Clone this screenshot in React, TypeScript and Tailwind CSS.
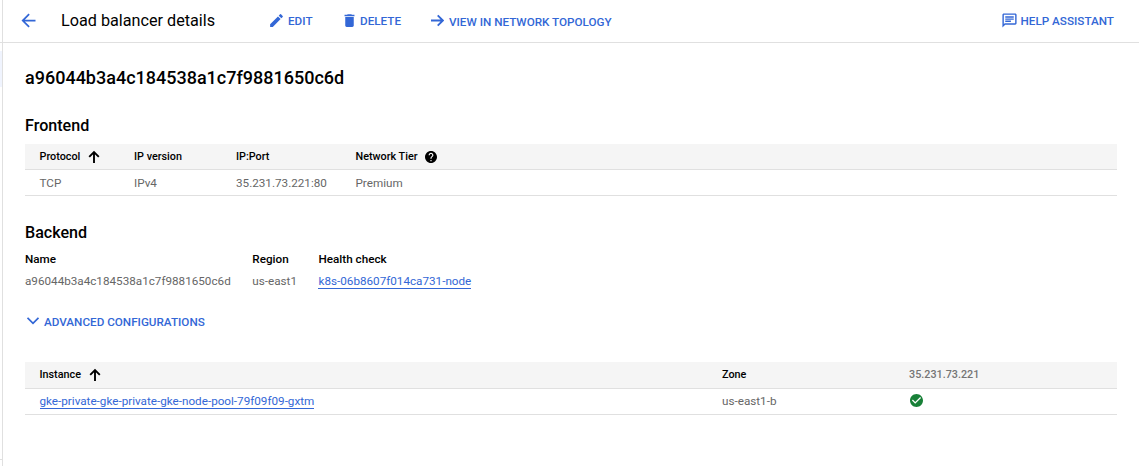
import type { ReactNode } from "react";

function Icon({ d, className, box = "0 0 24 24" }: { d: string; className: string; box?: string }) {
  return (
    <svg viewBox={box} className={`shrink-0 ${className}`} fill="currentColor" aria-hidden="true">
      <path d={d} />
    </svg>
  );
}

const BACK = "M20 11H7.83l5.59-5.59L12 4l-8 8 8 8 1.41-1.41L7.83 13H20v-2z";
const PENCIL =
  "M3 17.25V21h3.75L17.81 9.94l-3.75-3.75L3 17.25zM20.71 7.04a1 1 0 0 0 0-1.41l-2.34-2.34a1 1 0 0 0-1.41 0l-1.83 1.83 3.75 3.75 1.83-1.83z";
const TRASH = "M6 19c0 1.1.9 2 2 2h8c1.1 0 2-.9 2-2V7H6v12zM19 4h-3.5l-1-1h-5l-1 1H5v2h14V4z";
const CHAT =
  "M4 4h16v12H5.17L4 17.17V4m0-2c-1.1 0-1.99.9-1.99 2L2 22l4-4h14c1.1 0 2-.9 2-2V4c0-1.1-.9-2-2-2H4zm2 10h8v2H6v-2zm0-3h12v2H6V9zm0-3h12v2H6V6z";
const HELP =
  "M12 2C6.48 2 2 6.48 2 12s4.48 10 10 10 10-4.48 10-10S17.52 2 12 2zm1 17h-2v-2h2v2zm2.07-7.75l-.9.92C13.45 12.9 13 13.5 13 15h-2v-.5c0-1.1.45-2.1 1.17-2.83l1.24-1.26c.37-.36.59-.86.59-1.41 0-1.1-.9-2-2-2s-2 .9-2 2H8c0-2.21 1.79-4 4-4s4 1.79 4 4c0 .88-.36 1.68-.93 2.25z";
const CHECK =
  "M12 2C6.48 2 2 6.48 2 12s4.48 10 10 10 10-4.48 10-10S17.52 2 12 2zm-2 15l-5-5 1.41-1.41L10 14.17l7.59-7.59L19 8l-9 9z";

function SortArrow() {
  return (
    <svg viewBox="0 0 12 14" className="mt-px h-[14px] w-3 shrink-0" fill="none" stroke="black" strokeWidth="1.9" aria-hidden="true">
      <path d="M6 13V2M1.2 6.8 6 2l4.8 4.8" />
    </svg>
  );
}

function Action({ children, className }: { children: ReactNode; className: string }) {
  return (
    <button className={`flex items-center whitespace-nowrap text-[11.7px] font-medium text-[#3367d6] ${className}`}>
      {children}
    </button>
  );
}

export default function App() {
  return (
    <div className="flex h-[466px] w-full overflow-hidden bg-white font-['Roboto',sans-serif] text-[11.7px] leading-4 text-black">
      <aside className="flex w-[2px] shrink-0 flex-col">
        <div className="h-[43px] border-b border-[#e0e0e0]" />
        <div className="mt-2 h-9 bg-[#f0f4fe]" />
        <div className="mt-auto h-[7px] border-t border-[#e0e0e0]" />
      </aside>
      <main className="min-w-0 flex-1 border-l border-[#e0e0e0]">
        <header className="flex h-[43px] items-center border-b border-[#e0e0e0] pr-[25px] pb-[1px]">
          <Icon d={BACK} className="ml-[15px] h-[21px] w-[21px] text-[#3367d6]" />
          <h1 className="ml-[22px] w-[155px] text-[16.2px] leading-6 whitespace-nowrap">Load balancer details</h1>
          <Action className="ml-[52px] w-[72.5px]">
            <Icon d={PENCIL} className="mr-[3px] h-[17px] w-[17px]" />
            <span className="pt-px">EDIT</span>
          </Action>
          <Action className="w-[88.5px]">
            <Icon d={TRASH} className="mr-[2.5px] h-[17px] w-[17px]" />
            <span className="pt-px">DELETE</span>
          </Action>
          <Action className="">
            <svg viewBox="0 0 12 12" className="mr-[5px] ml-[2px] h-[13px] w-[13px]" fill="none" stroke="currentColor" strokeWidth="1.7" aria-hidden="true">
              <path d="M0 6h11M6.2 1.2 11 6l-4.8 4.8" />
            </svg>
            <span className="pt-[3px]">VIEW IN NETWORK TOPOLOGY</span>
          </Action>
          <Action className="ml-auto">
            <Icon d={CHAT} className="mr-[3px] h-[17px] w-[17px]" />
            <span className="pt-px">HELP ASSISTANT</span>
          </Action>
        </header>

        <div className="flex flex-col pr-[22px] pl-[22px]">
          <h2 className="mt-[23px] text-[18px] leading-6 font-medium">a96044b3a4c184538a1c7f9881650c6d</h2>
          <h3 className="mt-[26px] text-[16.1px] leading-5 font-medium">Frontend</h3>
          <div className="mt-[8px] grid h-[26px] grid-cols-[94.5px_102px_119.5px_1fr] items-center border-b border-[#e0e0e0] bg-[#f5f5f5] pl-[14.5px] text-[10.8px] font-medium">
            <div className="flex items-center">
              <span className="w-[48.5px]">Protocol</span>
              <SortArrow />
            </div>
            <span>IP version</span>
            <span>IP:Port</span>
            <div className="flex items-center">
              <span className="w-[69.5px]">Network Tier</span>
              <Icon d={HELP} box="2 2 20 20" className="h-3 w-3" />
            </div>
          </div>
          <div className="grid h-[26px] grid-cols-[94.5px_102px_119.5px_1fr] items-center border-b border-[#e0e0e0] pl-[14.5px] text-[#666666]">
            <span>TCP</span>
            <span>IPv4</span>
            <span>35.231.73.221:80</span>
            <span>Premium</span>
          </div>

          <h3 className="mt-[27px] text-[16.1px] leading-5 font-medium">Backend</h3>
          <div className="mt-[8px] grid grid-cols-[227.3px_66.2px_1fr] font-medium">
            <span>Name</span>
            <span>Region</span>
            <span>Health check</span>
          </div>
          <div className="mt-[6px] grid grid-cols-[227.3px_66.2px_1fr] text-[#666666]">
            <span>a96044b3a4c184538a1c7f9881650c6d</span>
            <span>us-east1</span>
            <a className="h-4 justify-self-start border-b border-[#3367d6] text-[#3367d6]">k8s-06b8607f014ca731-node</a>
          </div>
          <Action className="mt-[25px] pl-[2px]">
            <svg viewBox="0 0 12 8" className="mr-[5px] mb-[2px] h-2 w-3" fill="none" stroke="currentColor" strokeWidth="1.8" aria-hidden="true">
              <path d="M.5.8 6 6.3 11.5.8" />
            </svg>
            <span>ADVANCED CONFIGURATIONS</span>
          </Action>

          <div className="mt-[32px] grid h-[27px] grid-cols-[682.5px_187px_1fr] items-center border-b border-[#e0e0e0] bg-[#f5f5f5] pb-[1px] pl-[14.5px] text-[10.8px] font-medium">
            <div className="flex items-center">
              <span className="w-[49.5px]">Instance</span>
              <SortArrow />
            </div>
            <span>Zone</span>
            <span className="text-[#757575]">35.231.73.221</span>
          </div>
          <div className="grid h-[26px] grid-cols-[682.5px_187px_1fr] items-start border-b border-[#e0e0e0] pt-[4px] pl-[14.5px] text-[#666666]">
            <a className="h-4 justify-self-start border-b border-[#3367d6] text-[#3367d6]">
              gke-private-gke-private-gke-node-pool-79f09f09-gxtm
            </a>
            <span>us-east1-b</span>
            <Icon d={CHECK} box="2 2 20 20" className="mt-[1px] ml-[1px] h-[13px] w-[13px] text-[#188038]" />
          </div>
        </div>
      </main>
    </div>
  );
}
